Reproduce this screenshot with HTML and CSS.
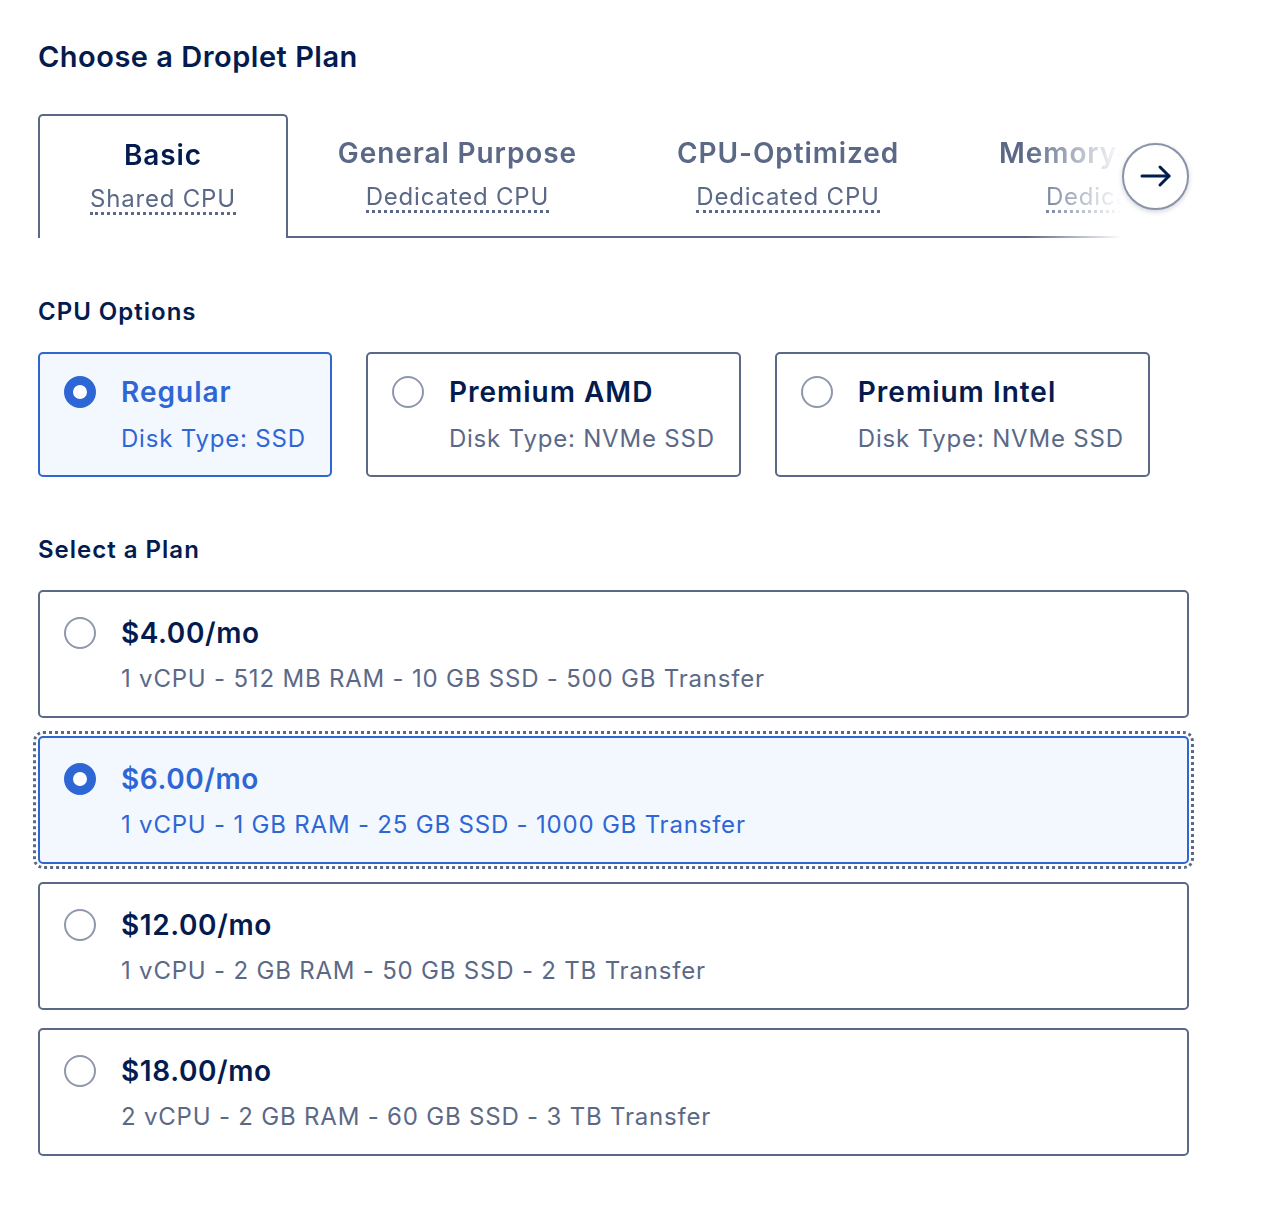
FILE: index.html
```html
<!DOCTYPE html>
<html lang="en">
<head>
<meta charset="utf-8">
<title>Choose a Droplet Plan</title>
<link rel="stylesheet" href="styles.css">
</head>
<body>
<main class="page">
  <h1 class="page-title">Choose a Droplet Plan</h1>

  <div class="tabs">
    <div class="tab-strip">
      <div class="tab tab-active">
        <span class="tab-title">Basic</span>
        <span class="tab-sub">Shared CPU</span>
      </div>
      <div class="tab">
        <span class="tab-title">General Purpose</span>
        <span class="tab-sub">Dedicated CPU</span>
      </div>
      <div class="tab">
        <span class="tab-title">CPU-Optimized</span>
        <span class="tab-sub">Dedicated CPU</span>
      </div>
      <div class="tab">
        <span class="tab-title">Memory-Optimized</span>
        <span class="tab-sub">Dedicated CPU</span>
      </div>
      <div class="tab-fill"></div>
    </div>
    <button class="scroll-btn" type="button" aria-label="Next">
      <svg width="32" height="32" viewBox="0 0 32 32" fill="none" stroke="#031b4e" stroke-width="3" stroke-linecap="round" stroke-linejoin="round">
        <path d="M2 16 H29"/>
        <path d="M20 7 L29 16 L20 25"/>
      </svg>
    </button>
  </div>

  <h2 class="section-title">CPU Options</h2>
  <div class="cpu-options">
    <div class="option option-selected">
      <span class="radio radio-on"></span>
      <div class="option-text">
        <div class="option-title">Regular</div>
        <div class="option-sub">Disk Type: SSD</div>
      </div>
    </div>
    <div class="option">
      <span class="radio"></span>
      <div class="option-text">
        <div class="option-title">Premium AMD</div>
        <div class="option-sub">Disk Type: NVMe SSD</div>
      </div>
    </div>
    <div class="option">
      <span class="radio"></span>
      <div class="option-text">
        <div class="option-title">Premium Intel</div>
        <div class="option-sub">Disk Type: NVMe SSD</div>
      </div>
    </div>
  </div>

  <h2 class="section-title">Select a Plan</h2>
  <div class="plans">
    <div class="plan">
      <span class="radio"></span>
      <div class="plan-text">
        <div class="plan-price">$4.00/mo</div>
        <div class="plan-spec">1 vCPU - 512 MB RAM - 10 GB SSD - 500 GB Transfer</div>
      </div>
    </div>
    <div class="plan plan-selected">
      <span class="radio radio-on"></span>
      <div class="plan-text">
        <div class="plan-price">$6.00/mo</div>
        <div class="plan-spec">1 vCPU - 1 GB RAM - 25 GB SSD - 1000 GB Transfer</div>
      </div>
    </div>
    <div class="plan">
      <span class="radio"></span>
      <div class="plan-text">
        <div class="plan-price">$12.00/mo</div>
        <div class="plan-spec">1 vCPU - 2 GB RAM - 50 GB SSD - 2 TB Transfer</div>
      </div>
    </div>
    <div class="plan">
      <span class="radio"></span>
      <div class="plan-text">
        <div class="plan-price">$18.00/mo</div>
        <div class="plan-spec">2 vCPU - 2 GB RAM - 60 GB SSD - 3 TB Transfer</div>
      </div>
    </div>
  </div>
</main>
</body>
</html>
```

FILE: styles.css
```css
* { box-sizing: border-box; }

html, body {
  margin: 0;
  padding: 0;
  background: #ffffff;
}

body {
  font-family: Inter, "Open Sans", "Liberation Sans", sans-serif;
  color: #031b4e;
}

.page {
  width: 1151px;
  margin-left: 38px;
  padding-top: 37px;
}

.page-title {
  margin: 0;
  font-size: 29px;
  line-height: 40px;
  font-weight: 600;
  letter-spacing: 0.5px;
  color: #031b4e;
}

/* Tabs */
.tabs {
  display: flex;
  align-items: center;
  margin-top: 37px;
}

.tab-strip {
  flex: 1;
  display: flex;
  overflow: hidden;
  min-width: 0;
  -webkit-mask-image: linear-gradient(to right, #000 calc(100% - 95px), transparent 100%);
  mask-image: linear-gradient(to right, #000 calc(100% - 95px), transparent 100%);
}

.tab {
  flex: none;
  display: flex;
  flex-direction: column;
  align-items: center;
  height: 124px;
  padding: 21px 50px 0;
  border-bottom: 2px solid #5b6987;
  white-space: nowrap;
}

.tab-active {
  border: 2px solid #5b6987;
  border-bottom: none;
  border-radius: 5px 5px 0 0;
  padding: 21px 50px 0;
}

.tab-fill {
  flex: 1 0 200px;
  border-bottom: 2px solid #5b6987;
}

.tab-title {
  font-size: 28px;
  line-height: 36px;
  font-weight: 600;
  letter-spacing: 0.9px;
  color: #5b6987;
}

.tab-active .tab-title {
  color: #031b4e;
}

.tab-sub {
  display: inline-block;
  margin-top: 12px;
  font-size: 24px;
  line-height: 27px;
  letter-spacing: 0.8px;
  color: #5b6987;
  border-bottom: 3px dotted #5b6987;
}

.scroll-btn {
  flex: none;
  width: 67px;
  height: 67px;
  padding: 0;
  border-radius: 50%;
  border: 2px solid #8a93a8;
  background: #ffffff;
  box-shadow: 0 2px 5px rgba(3, 27, 78, 0.18);
  display: flex;
  align-items: center;
  justify-content: center;
}

/* Section headings */
.section-title {
  margin: 0;
  font-size: 24px;
  line-height: 32px;
  font-weight: 600;
  letter-spacing: 1px;
  color: #031b4e;
}

.tabs + .section-title {
  margin-top: 58px;
}

/* CPU options */
.cpu-options {
  display: flex;
  gap: 34px;
  margin-top: 24px;
  margin-bottom: 57px;
}

.option {
  display: flex;
  align-items: flex-start;
  gap: 25px;
  height: 125px;
  padding: 20px 24px 0 24px;
  border: 2px solid #5b6987;
  border-radius: 5px;
  background: #ffffff;
}

.option-selected {
  border-color: #2f66d0;
  background: #f3f8ff;
}

.radio {
  flex: none;
  width: 32px;
  height: 32px;
  margin-top: 2px;
  border-radius: 50%;
  border: 2px solid #8f98ab;
  background: #ffffff;
}

.radio-on {
  border: 9px solid #2f66d6;
}

.option-title {
  font-size: 28px;
  line-height: 36px;
  font-weight: 600;
  letter-spacing: 1px;
  color: #031b4e;
  white-space: nowrap;
}

.option-sub {
  margin-top: 13px;
  font-size: 24px;
  line-height: 32px;
  letter-spacing: 0.8px;
  color: #5b6987;
  white-space: nowrap;
}

.option-selected .option-title,
.option-selected .option-sub {
  color: #2f66d6;
}

/* Plans */
.plans {
  display: flex;
  flex-direction: column;
  gap: 18px;
  margin-top: 24px;
}

.plan {
  display: flex;
  align-items: flex-start;
  gap: 25px;
  height: 128px;
  padding: 23px 24px 0 24px;
  border: 2px solid #5b6987;
  border-radius: 5px;
  background: #ffffff;
}

.plan-selected {
  border-color: #2f66d0;
  background: #f3f8ff;
  outline: 3px dotted #5b6987;
  outline-offset: 2px;
}

.plan-price {
  font-size: 28px;
  line-height: 36px;
  font-weight: 600;
  letter-spacing: 0.6px;
  color: #031b4e;
}

.plan-spec {
  margin-top: 12px;
  font-size: 24px;
  line-height: 32px;
  letter-spacing: 0.8px;
  color: #5b6987;
}

.plan-selected .plan-price,
.plan-selected .plan-spec {
  color: #2f66d6;
}
```
